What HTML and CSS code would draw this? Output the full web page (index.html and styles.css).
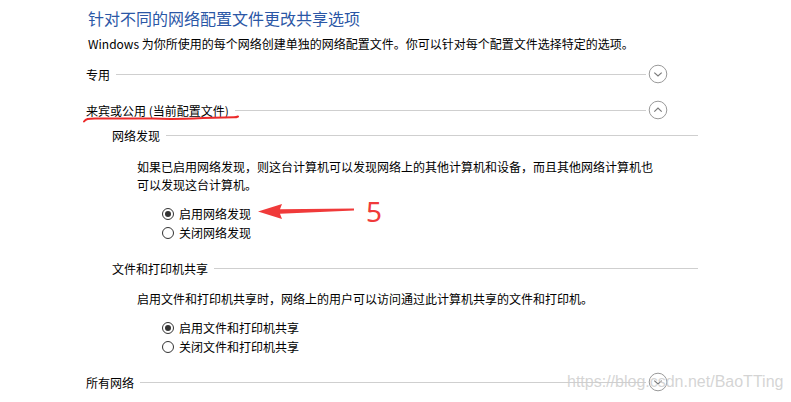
FILE: index.html
```html
<!DOCTYPE html>
<html lang="zh-CN">
<head>
  <meta charset="UTF-8">
  <meta name="viewport" content="width=device-width, initial-scale=1.0">
  <title>高级共享设置</title>
  <link rel="stylesheet" href="styles.css">
</head>
<body>
  <div class="page">
    <h1 class="title">针对不同的网络配置文件更改共享选项</h1>
    <p class="intro">Windows 为你所使用的每个网络创建单独的网络配置文件。你可以针对每个配置文件选择特定的选项。</p>

    <div class="section-head head-private">
      <span class="section-name">专用</span>
      <span class="rule"></span>
      <button class="toggle" aria-label="展开">
        <svg width="20" height="20" viewBox="0 0 20 20"><circle cx="10" cy="10" r="8.8" fill="none" stroke="#9a9a9a" stroke-width="1"/><path d="M6.3 8.6 L10 12 L13.7 8.6" fill="none" stroke="#7a7a7a" stroke-width="1.2"/></svg>
      </button>
    </div>

    <div class="section-head head-guest">
      <span class="section-name current">来宾或公用 (当前配置文件)
        <svg class="scribble" width="156" height="10" viewBox="0 0 156 10"><path d="M1 7.5 C3 5, 5 4.5, 12 4.5 L70 4.5 C90 5.5, 100 5, 120 4 L151 3.3 C153 3.3, 154 3, 155 2.5" fill="none" stroke="#ec2a2a" stroke-width="2" stroke-linecap="round"/></svg>
      </span>
      <span class="rule"></span>
      <button class="toggle" aria-label="折叠">
        <svg width="20" height="20" viewBox="0 0 20 20"><circle cx="10" cy="10" r="8.8" fill="none" stroke="#9a9a9a" stroke-width="1"/><path d="M6.3 11.6 L10 8 L13.7 11.6" fill="none" stroke="#7a7a7a" stroke-width="1.2"/></svg>
      </button>
    </div>

    <div class="group">
      <div class="group-head head-discovery">
        <span>网络发现</span>
        <span class="rule"></span>
      </div>
      <p class="note note-discovery">如果已启用网络发现，则这台计算机可以发现网络上的其他计算机和设备，而且其他网络计算机也可以发现这台计算机。</p>
      <div class="options">
        <label class="option">
          <span class="radio checked"></span>启用网络发现
          <span class="callout">
            <svg width="100" height="18" viewBox="0 0 100 18"><path d="M0 9.5 L24 2 L22 7.2 L96 6.6 L96 8.4 L22 11.8 L24 17 Z" fill="#f03a3a"/></svg>
            <span class="step">5</span>
          </span>
        </label>
        <label class="option"><span class="radio"></span>关闭网络发现</label>
      </div>

      <div class="group-head head-sharing">
        <span>文件和打印机共享</span>
        <span class="rule"></span>
      </div>
      <p class="note note-sharing">启用文件和打印机共享时，网络上的用户可以访问通过此计算机共享的文件和打印机。</p>
      <div class="options">
        <label class="option"><span class="radio checked"></span>启用文件和打印机共享</label>
        <label class="option"><span class="radio"></span>关闭文件和打印机共享</label>
      </div>
    </div>

    <div class="section-head head-all">
      <span class="section-name">所有网络</span>
      <span class="rule"></span>
      <button class="toggle" aria-label="展开">
        <svg width="20" height="20" viewBox="0 0 20 20"><circle cx="10" cy="10" r="8.8" fill="none" stroke="#9a9a9a" stroke-width="1"/><path d="M6.3 8.6 L10 12 L13.7 8.6" fill="none" stroke="#7a7a7a" stroke-width="1.2"/></svg>
      </button>
    </div>
  </div>
  <div class="watermark">https://blog.csdn.net/BaoTTing</div>
</body>
</html>
```

FILE: styles.css
```css
/* 高级共享设置 */
body {
  margin: 0;
  background: #fff;
  color: #000;
  font-family: "Noto Sans CJK SC", "Noto Sans", sans-serif;
  font-size: 12px;
  overflow: hidden;
}
.page {
  padding: 8px 0 0 88px;
  width: 610px;
}
.title {
  margin: 0;
  font-size: 16px;
  font-weight: normal;
  line-height: 20px;
  color: #2b57a6;
}
.intro {
  margin: 7px 0 0;
  line-height: 18px;
}
.section-head {
  display: flex;
  align-items: center;
  height: 20px;
  width: 582px;
  margin-left: -2px;
}
.head-private {
  margin-top: 11px;
}
.head-guest {
  margin-top: 16px;
}
.head-all {
  margin-top: 16px;
}
.section-name {
  position: relative;
  white-space: nowrap;
}
.rule {
  flex: 1;
  height: 1px;
  background: #cfcfcf;
  margin-left: 6px;
}
.toggle {
  width: 20px;
  height: 20px;
  padding: 0;
  margin-left: 2px;
  border: none;
  background: none;
  display: flex;
}
.scribble {
  position: absolute;
  left: -3px;
  top: 12px;
}
.group {
  padding-left: 24px;
}
.group-head {
  display: flex;
  align-items: center;
  height: 18px;
  width: 586px;
}
.head-discovery {
  margin-top: 6px;
}
.head-sharing {
  margin-top: 17px;
}
.note {
  margin: 0;
  padding-left: 25px;
  line-height: 18px;
  width: 524px;
}
.note-discovery {
  margin-top: 14px;
}
.note-sharing {
  margin-top: 13px;
}
.options {
  margin-top: 10px;
  padding-left: 50px;
}
.option {
  display: flex;
  align-items: center;
  height: 19px;
  position: relative;
}
.radio {
  width: 12px;
  height: 12px;
  border: 1px solid #333;
  border-radius: 50%;
  margin-right: 5px;
  box-sizing: border-box;
  display: flex;
  align-items: center;
  justify-content: center;
}
.radio.checked::after {
  content: "";
  width: 6px;
  height: 6px;
  border-radius: 50%;
  background: #333;
}
.callout {
  position: absolute;
  left: 96px;
  top: -8px;
  display: flex;
  align-items: center;
}
.step {
  margin-left: 8px;
  font-family: "Noto Sans", sans-serif;
  font-size: 28px;
  line-height: 30px;
  color: #f03a3a;
}
.watermark {
  position: absolute;
  left: 567px;
  top: 373px;
  font-family: "Liberation Sans", sans-serif;
  font-size: 16px;
  color: rgba(205, 205, 205, 0.85);
  pointer-events: none;
}
```
